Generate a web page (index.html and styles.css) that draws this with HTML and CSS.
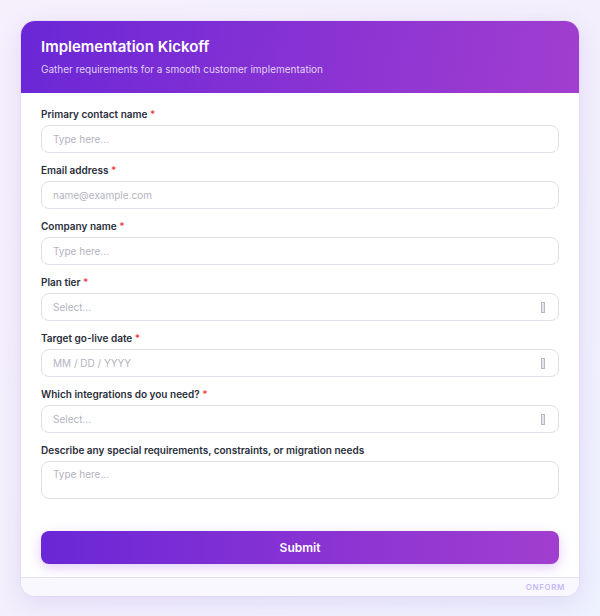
FILE: index.html
```html
<!DOCTYPE html>
<html lang="en">
<head>
<meta charset="UTF-8">
<meta name="viewport" content="width=device-width, initial-scale=1.0">
<title>Implementation Kickoff</title>
<link rel="stylesheet" href="styles.css">
</head>
<body>
<div class="card">
  <div class="head">
    <h1 class="title">Implementation Kickoff</h1>
    <p class="sub">Gather requirements for a smooth customer implementation</p>
  </div>

  <form class="form">
    <div class="field">
      <label class="label">Primary contact name <span class="req">*</span></label>
      <div class="input"><span class="ph">Type here...</span></div>
    </div>
    <div class="field">
      <label class="label">Email address <span class="req">*</span></label>
      <div class="input"><span class="ph">name@example.com</span></div>
    </div>
    <div class="field">
      <label class="label">Company name <span class="req">*</span></label>
      <div class="input"><span class="ph">Type here...</span></div>
    </div>
    <div class="field">
      <label class="label">Plan tier <span class="req">*</span></label>
      <div class="input"><span class="ph">Select...</span><span class="ico"></span></div>
    </div>
    <div class="field">
      <label class="label">Target go-live date <span class="req">*</span></label>
      <div class="input"><span class="ph">MM / DD / YYYY</span><span class="ico"></span></div>
    </div>
    <div class="field">
      <label class="label">Which integrations do you need? <span class="req">*</span></label>
      <div class="input"><span class="ph">Select...</span><span class="ico"></span></div>
    </div>
    <div class="field">
      <label class="label">Describe any special requirements, constraints, or migration needs</label>
      <div class="input area"><span class="ph">Type here...</span></div>
    </div>
    <button type="button" class="submit">Submit</button>
  </form>

  <div class="foot">ONFORM</div>
</div>
</body>
</html>
```

FILE: styles.css
```css
body{margin:0;padding:21px;font-family:Inter,"Noto Sans",sans-serif;background:linear-gradient(135deg,#f6f0fd 0%,#f3effc 50%,#eef1fe 100%);min-height:616px;box-sizing:border-box}
.card{background:#fff;border-radius:14px;overflow:hidden;box-shadow:0 6px 24px rgba(120,80,200,.14),0 0 0 1px rgba(150,120,210,.08)}
.head{background:linear-gradient(100deg,#6a27d6 0%,#8a33d3 55%,#a13ecf 100%);padding:17px 20px 17px}
.title{margin:0;font-size:15px;line-height:18px;font-weight:600;color:#fff}
.sub{margin:6px 0 0;font-size:10px;line-height:14px;color:rgba(255,255,255,.78)}
.form{padding:14px 20px 13px;display:flex;flex-direction:column;gap:10px}
.field{display:flex;flex-direction:column;gap:4px}
.label{font-size:10px;line-height:14px;font-weight:600;color:#2a2e3a}
.req{color:#ef4444}
.input{height:28px;box-sizing:border-box;border:1.5px solid #e1dfe9;border-radius:8px;display:flex;align-items:center;justify-content:space-between;padding:0 12px 0 11px}
.area{height:38px;align-items:flex-start;padding-top:6px}
.ph{font-size:10px;color:#b4b3bf}
.ico{width:2px;height:9px;border:1px solid #b9b8c2;background:#e6e5ec;margin-right:1px}
.submit{margin-top:22px;height:33px;border:0;border-radius:8px;background:linear-gradient(90deg,#6a27d6 0%,#8a33d3 55%,#a13ecf 100%);color:#fff;font-family:inherit;font-size:12px;font-weight:600;box-shadow:0 4px 12px rgba(140,60,220,.25)}
.foot{border-top:1px solid #e6e2ef;background:#faf8ff;height:18px;padding-right:14px;display:flex;align-items:center;justify-content:flex-end;font-size:8px;font-weight:600;letter-spacing:.6px;color:#c6b8f7}
```
